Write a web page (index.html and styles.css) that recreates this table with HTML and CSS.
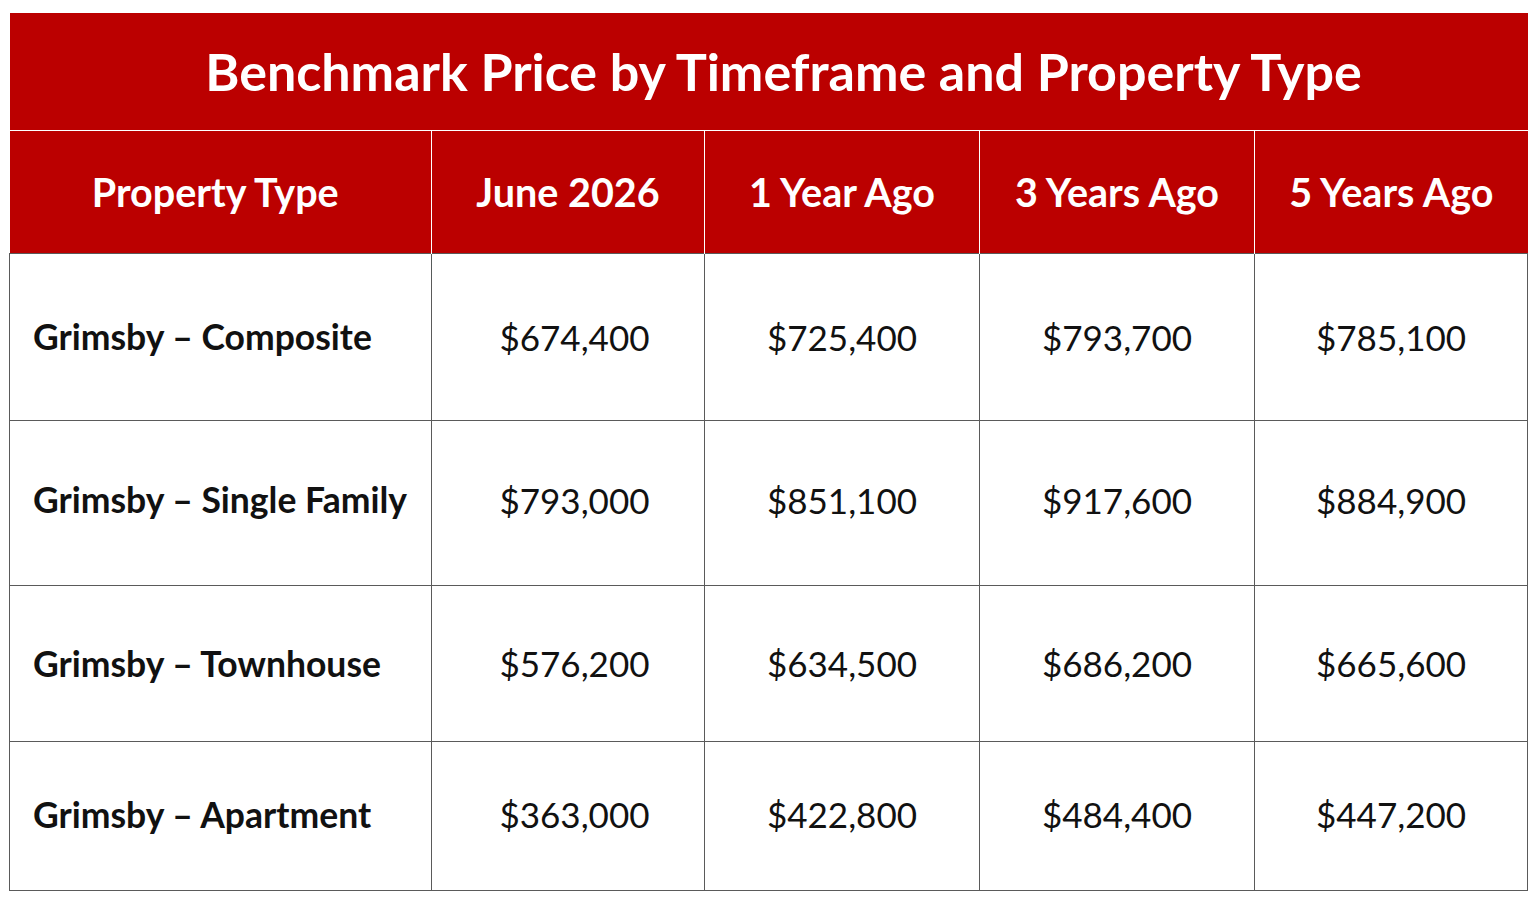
FILE: index.html
```html
<!DOCTYPE html>
<html lang="en">
<head>
<meta charset="utf-8">
<title>Benchmark Price by Timeframe and Property Type</title>
<link rel="stylesheet" href="styles.css">
</head>
<body>
<table class="bench">
  <colgroup>
    <col class="c-type">
    <col class="c-val1">
    <col class="c-val">
    <col class="c-val">
    <col class="c-val5">
  </colgroup>
  <thead>
    <tr class="title-row"><th colspan="5" class="title">Benchmark Price by Timeframe and Property Type</th></tr>
    <tr class="head-row">
      <th class="h-type">Property Type</th>
      <th>June 2026</th>
      <th>1 Year Ago</th>
      <th>3 Years Ago</th>
      <th>5 Years Ago</th>
    </tr>
  </thead>
  <tbody>
    <tr class="r1">
      <td class="name">Grimsby – Composite</td>
      <td class="first-val">$674,400</td><td>$725,400</td><td>$793,700</td><td>$785,100</td>
    </tr>
    <tr class="r2">
      <td class="name">Grimsby – Single Family</td>
      <td class="first-val">$793,000</td><td>$851,100</td><td>$917,600</td><td>$884,900</td>
    </tr>
    <tr class="r3">
      <td class="name">Grimsby – Townhouse</td>
      <td class="first-val">$576,200</td><td>$634,500</td><td>$686,200</td><td>$665,600</td>
    </tr>
    <tr class="r4">
      <td class="name">Grimsby – Apartment</td>
      <td class="first-val">$363,000</td><td>$422,800</td><td>$484,400</td><td>$447,200</td>
    </tr>
  </tbody>
</table>
</body>
</html>
```
FILE: styles.css
```css
html, body {
  margin: 0;
  background: #ffffff;
}
body {
  padding: 13px 9px 0 9px;
  font-family: Lato, "Open Sans", sans-serif;
}
.bench {
  width: 1518px;
  border-collapse: collapse;
  table-layout: fixed;
}
.c-type { width: 422px; }
.c-val1 { width: 273px; }
.c-val { width: 275px; }
.c-val5 { width: 273px; }

.bench th {
  background: #bb0000;
  color: #ffffff;
  font-weight: 700;
  text-align: center;
  padding: 0;
  border: 1px solid #ffffff;
}
.title-row { height: 117px; }
.title {
  font-size: 52px;
  padding-left: 30px !important;
  border-bottom: 2px solid #ffffff;
}
.head-row { height: 123px; }
.head-row th {
  font-size: 39.5px;
  border-top: 0;
  border-bottom: 0;
}
.head-row th.h-type { padding-right: 10px; }
.head-row th:first-child { border-left: 0; }
.head-row th:last-child { border-right: 0; }
.title-row th { border-top: 0; border-left: 0; border-right: 0; }

.bench td {
  border: 1px solid #5a5a5a;
  text-align: center;
  font-size: 35px;
  color: #111111;
  padding: 0;
}
.bench td.first-val { padding-left: 13px; }
.bench td.name {
  text-align: left;
  padding-left: 23px;
  font-weight: 700;
  font-size: 35.5px;
}
.r1 { height: 167px; }
.r2 { height: 165px; }
.r2 td { padding-bottom: 6px; }
.r3 { height: 156px; }
.r4 { height: 149px; }
.r4 td { padding-bottom: 3px; }
```
